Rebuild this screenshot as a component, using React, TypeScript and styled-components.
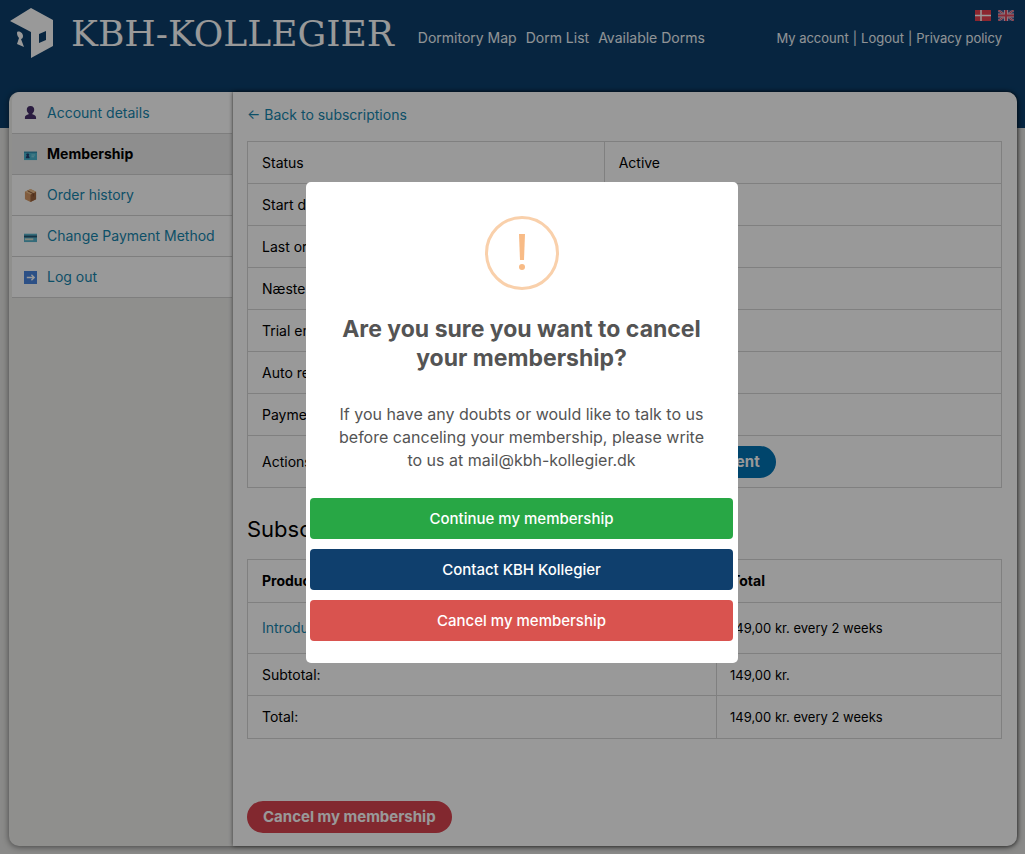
import React from "react";
import styled, { createGlobalStyle, css } from "styled-components";

const Global = createGlobalStyle`
  *, *::before, *::after { box-sizing: border-box; }
  body {
    margin: 0;
    background: #e6e6e4;
    color: #000;
    font: 400 14px/22px Inter, "Open Sans", sans-serif;
  }
  a { color: #1685ad; text-decoration: none; }
  button { font: inherit; border: 0; cursor: pointer; }
`;

const Page = styled.div`
  min-height: 100vh;
  padding-bottom: 8px;
  background: linear-gradient(#0c3f6c 0 128px, transparent 128px);
`;

const Header = styled.header`
  position: relative;
  display: flex;
  align-items: flex-start;
  height: 92px;
  padding: 8px 23px 0 10px;
`;

const Brand = styled.a`
  display: flex;
  gap: 18px;
  color: #fff;
  font: 400 36px/52px "DejaVu Serif", serif;
`;

const Nav = styled.nav`
  display: flex;
  gap: 9px;
  margin: 19px 0 0 24px;
  white-space: nowrap;
  a { color: #f0f6fa; }
`;

const AccountNav = styled(Nav)`
  gap: 4px;
  margin-left: auto;
  color: #f0f6fa;
  font-size: 13px;
`;

const Flags = styled.div`
  position: absolute;
  top: 10px;
  right: 11px;
  display: flex;
  gap: 7px;
  a, svg { display: block; }
`;

const Card = styled.div`
  display: grid;
  grid-template-columns: 224px 1fr;
  margin: 0 8px 0 9px;
  border-radius: 10px;
  background: #eeeeec;
  box-shadow: 0 1px 6px rgba(0, 0, 0, 0.5);
`;

const Sidebar = styled.nav`
  padding: 0 1px 0 3px;
`;

const SideItem = styled.a<{ $active?: boolean }>`
  display: flex;
  align-items: center;
  gap: 10px;
  height: 41px;
  padding-left: 12px;
  border-bottom: 1px solid #d2d2d2;
  background: #fff;
  white-space: nowrap;
  &:first-child {
    height: 42px;
    border-top-left-radius: 8px;
  }
  ${(p) => p.$active && css`
    background: #ededed;
    color: #000;
    font-weight: 700;
  `}
`;

const Main = styled.main`
  padding: 12px 15px 13px 14px;
  border-radius: 0 10px 10px 0;
  background: #fff;
  box-shadow: 0 0 4px rgba(0, 0, 0, 0.6);
`;

const Table = styled.table`
  width: 100%;
  margin-top: 15px;
  border: 1px solid #d6d6d6;
  border-collapse: collapse;
  table-layout: fixed;
`;

const Row = styled.tr<{ $h: number }>`
  height: ${(p) => p.$h}px;
  border-bottom: 1px solid #d6d6d6;
`;

const Cell = styled.td<{ $w?: string }>`
  width: ${(p) => p.$w || "auto"};
  padding: 0 14px;
  border-left: 1px solid #d6d6d6;
  text-align: left;
  white-space: nowrap;
`;

const PriceCell = styled(Cell)`
  padding-left: 13px;
  font-size: 13px;
`;

const Heading = styled.h2`
  margin: 26px 0 0;
  font-size: 22px;
  font-weight: 400;
  line-height: 30px;
`;

const Pill = styled.button<{ $color: string }>`
  height: 32px;
  padding: 0 16px;
  border-radius: 16px;
  background: ${(p) => p.$color};
  color: #fff;
  font-size: 15px;
  font-weight: 700;
`;

const Actions = styled.div`
  display: flex;
  gap: 8px;
`;

const Footer = styled.div`
  margin-top: 62px;
`;

const Overlay = styled.div`
  position: fixed;
  inset: 0;
  display: flex;
  align-items: center;
  justify-content: center;
  padding: 0 0 9px 19px;
  background: rgba(0, 0, 0, 0.4);
`;

const Modal = styled.div`
  width: 432px;
  max-width: 100%;
  padding: 34px 5px 22px 4px;
  border-radius: 5px;
  background: #fff;
  color: #545454;
  text-align: center;
  > svg { display: block; margin: 0 auto; }
`;

const Title = styled.h1`
  margin: 25px 30px 0;
  font-size: 23px;
  font-weight: 700;
  line-height: 29px;
`;

const Message = styled.p`
  margin: 30px 20px 26px;
  font-size: 16px;
  line-height: 23px;
`;

const ModalActions = styled.div`
  display: grid;
  gap: 10px;
`;

const ModalButton = styled.button<{ $color: string }>`
  height: 41px;
  border-radius: 4px;
  background: ${(p) => p.$color};
  color: #fff;
  font-size: 15px;
  font-weight: 500;
`;

const House = () => (
  <svg width="43" height="50" viewBox="0 0 43 50" fill="#fff" aria-hidden="true">
    <path fillRule="evenodd" d="M0 13 21 0l22 12v26L21 50V24zM29 26v9l7-3v-9z" />
    <path d="M7 25c0-3 6-1 6 3 0 2-1 3-2 3l3 8-7-3 2-6c-1-1-2-3-2-5z" />
  </svg>
);

const Dane = () => (
  <svg width="16" height="11" viewBox="0 0 16 11">
    <path fill="#e8404f" d="M0 0h16v11H0z" />
    <path stroke="#fff" strokeWidth="1.5" d="M6 0v11M0 5.5h16" />
  </svg>
);

const Brit = () => (
  <svg width="16" height="11" viewBox="0 0 16 11">
    <path fill="#44558f" d="M0 0h16v11H0z" />
    <path stroke="#e0c8d8" strokeWidth="2" d="m0 0 16 11M16 0 0 11" />
    <path stroke="#e0455a" d="m0 0 16 11M16 0 0 11" />
    <path stroke="#e0c8d8" strokeWidth="4" d="M8 0v11M0 5.5h16" />
    <path stroke="#e0455a" strokeWidth="2" d="M8 0v11M0 5.5h16" />
  </svg>
);

const icons = {
  person: (
    <path fill="#47306b" d="M7 0c3 0 4 2 4 4 0 2-1 3-2 4v1c2 1 4 1 4 4v1H1v-1c0-3 2-3 4-4V8C4 7 3 6 3 4c0-2 1-4 4-4z" />
  ),
  id: (
    <>
      <path fill="#48b5cf" d="M0 4h14v9H0z" />
      <path fill="#2b7fa0" d="M0 4h14v1H0z" />
      <path fill="#263f70" d="M4 6a1 1 0 0 1 1 2l1 2v1H2v-1l1-2a1 1 0 0 1 1-2z" />
      <path fill="#8ad8e6" d="M8 7h4v1H8zm0 2h3v1H8z" />
    </>
  ),
  box: (
    <>
      <path fill="#d79a68" d="m7 0 6 3v8l-6 3-6-3V3z" />
      <path fill="#9d643e" d="m7 6 6-3v8l-6 3z" />
      <path fill="#efc08e" d="m7 0 6 3-6 3-6-3z" />
      <path stroke="#7d4c2e" fill="none" d="m4 2 6 3v3" />
    </>
  ),
  card: (
    <>
      <path fill="#57b3cc" d="M0 4h14v9H0z" />
      <path fill="#275873" d="M0 6h14v2H0z" />
      <path fill="#d5dfcf" d="M1 9h9v2H1z" />
    </>
  ),
  exit: (
    <>
      <path fill="#4a86e0" d="M0 0h14v14H0z" />
      <path stroke="#fff" strokeWidth="1.5" fill="none" d="M3 7h8M8 4l3 3-3 3" />
    </>
  ),
};

const menu: { icon: keyof typeof icons; label: string; active?: boolean }[] = [
  { icon: "person", label: "Account details" },
  { icon: "id", label: "Membership", active: true },
  { icon: "box", label: "Order history" },
  { icon: "card", label: "Change Payment Method" },
  { icon: "exit", label: "Log out" },
];

const details = [
  ["Status", "Active"],
  ["Start date", ""],
  ["Last order date", ""],
  ["Næste payment date", ""],
  ["Trial end date", ""],
  ["Auto renew", ""],
  ["Payment", ""],
];

export default function App() {
  return (
    <>
      <Global />
      <Page>
        <Header>
          <Brand href="#"><House />KBH-KOLLEGIER</Brand>
          <Nav>
            <a href="#">Dormitory Map</a>
            <a href="#">Dorm List</a>
            <a href="#">Available Dorms</a>
          </Nav>
          <AccountNav>
            <a href="#">My account</a>|<a href="#">Logout</a>|<a href="#">Privacy policy</a>
          </AccountNav>
          <Flags>
            <a href="#" aria-label="Dansk"><Dane /></a>
            <a href="#" aria-label="English"><Brit /></a>
          </Flags>
        </Header>
        <Card>
          <Sidebar>
            {menu.map((m) => (
              <SideItem key={m.label} href="#" $active={m.active}>
                <svg width="13" height="13" viewBox="0 0 14 14" aria-hidden="true">{icons[m.icon]}</svg>
                {m.label}
              </SideItem>
            ))}
          </Sidebar>
          <Main>
            <a href="#">← Back to subscriptions</a>
            <Table>
              <tbody>
                {details.map(([k, v]) => (
                  <Row key={k} $h={42}>
                    <Cell $w="47.3%">{k}</Cell>
                    <Cell>{v}</Cell>
                  </Row>
                ))}
                <Row $h={52}>
                  <Cell>Actions</Cell>
                  <Cell>
                    <Actions><Pill $color="#0073b5">Change payment</Pill></Actions>
                  </Cell>
                </Row>
              </tbody>
            </Table>
            <Heading>Subscription totals</Heading>
            <Table>
              <thead>
                <Row $h={43}>
                  <Cell as="th" $w="62.2%">Product</Cell>
                  <Cell as="th">Total</Cell>
                </Row>
              </thead>
              <tbody>
                <Row $h={51}>
                  <Cell><a href="#">Introduction</a></Cell>
                  <PriceCell>149,00 kr. every 2 weeks</PriceCell>
                </Row>
                <Row $h={42}>
                  <Cell>Subtotal:</Cell>
                  <PriceCell>149,00 kr.</PriceCell>
                </Row>
                <Row $h={43}>
                  <Cell>Total:</Cell>
                  <PriceCell>149,00 kr. every 2 weeks</PriceCell>
                </Row>
              </tbody>
            </Table>
            <Footer><Pill $color="#d9434f">Cancel my membership</Pill></Footer>
          </Main>
        </Card>
      </Page>
      <Overlay>
        <Modal role="dialog" aria-modal="true" aria-labelledby="dialog-title">
          <svg width="74" height="74" viewBox="0 0 74 74" aria-hidden="true">
            <circle cx="37" cy="37" r="35.5" fill="none" stroke="#f9d0ab" strokeWidth="3" />
            <path fill="#f8bb86" d="M34 18h6l-1 26h-4z" />
            <circle cx="37" cy="51" r="3" fill="#f8bb86" />
          </svg>
          <Title id="dialog-title">Are you sure you want to cancel your membership?</Title>
          <Message>
            If you have any doubts or would like to talk to us before canceling your membership, please write to us at mail@kbh-kollegier.dk
          </Message>
          <ModalActions>
            <ModalButton $color="#28a745">Continue my membership</ModalButton>
            <ModalButton $color="#0f3f6d">Contact KBH Kollegier</ModalButton>
            <ModalButton $color="#d9534f">Cancel my membership</ModalButton>
          </ModalActions>
        </Modal>
      </Overlay>
    </>
  );
}
